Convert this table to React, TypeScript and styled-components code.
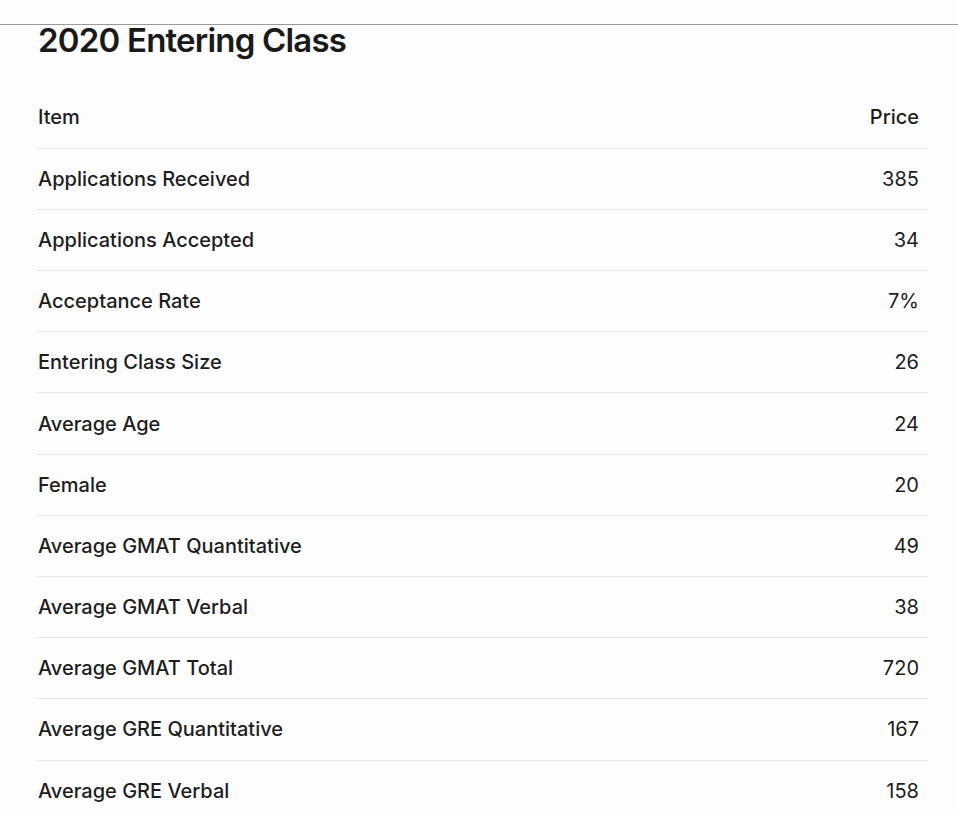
import styled, { createGlobalStyle } from 'styled-components';

const rows: [string, string][] = [
  ['Applications Received', '385'],
  ['Applications Accepted', '34'],
  ['Acceptance Rate', '7%'],
  ['Entering Class Size', '26'],
  ['Average Age', '24'],
  ['Female', '20'],
  ['Average GMAT Quantitative', '49'],
  ['Average GMAT Verbal', '38'],
  ['Average GMAT Total', '720'],
  ['Average GRE Quantitative', '167'],
  ['Average GRE Verbal', '158'],
];

const GlobalStyle = createGlobalStyle`
  body {
    margin: 0;
    background: #fdfdfd;
    font-family: Inter, "Liberation Sans", sans-serif;
    color: #1d1d1d;
  }
`;

const TopRule = styled.div`
  height: 24px;
  border-bottom: 1px solid #9a9a9a;
`;

const Section = styled.section`
  padding: 0 30px 0 36px;
`;

const Title = styled.h2`
  margin: -4px 0 28px 2px;
  font-size: 33px;
  line-height: 38px;
  font-weight: 600;
  letter-spacing: -0.8px;
  color: #1a1a1a;
`;

const Table = styled.table`
  width: 892px;
  border-collapse: collapse;
`;

const Row = styled.tr`
  height: 61.2px;
  border-bottom: 1px solid #e6e6e6;
`;

const Cell = styled.td<{ $right?: boolean }>`
  padding: 0 ${(p) => (p.$right ? '9px' : '0')} 0 ${(p) => (p.$right ? '0' : '2px')};
  text-align: ${(p) => (p.$right ? 'right' : 'left')};
  font-size: 20px;
  font-weight: ${(p) => (p.$right ? 400 : 500)};
  color: #1d1d1d;
`;

const HeadCell = styled(Cell).attrs({ as: 'th' })`
  font-weight: 500;
`;

export default function App() {
  return (
    <>
      <GlobalStyle />
      <TopRule />
      <Section>
        <Title>2020 Entering Class</Title>
        <Table>
          <thead>
            <Row>
              <HeadCell>Item</HeadCell>
              <HeadCell $right>Price</HeadCell>
            </Row>
          </thead>
          <tbody>
            {rows.map(([label, value]) => (
              <Row key={label}>
                <Cell>{label}</Cell>
                <Cell $right>{value}</Cell>
              </Row>
            ))}
          </tbody>
        </Table>
      </Section>
    </>
  );
}
